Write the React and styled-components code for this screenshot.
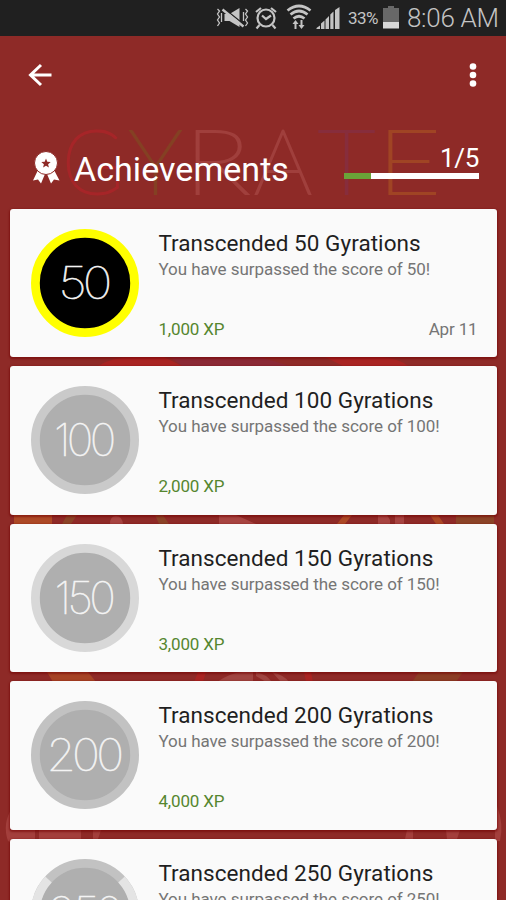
import styled, { createGlobalStyle } from 'styled-components'

const GlobalStyle = createGlobalStyle`
  * { box-sizing: border-box; }
  body {
    margin: 0;
    background: #8e2a27;
    font-family: Roboto, "Liberation Sans", sans-serif;
  }
`

const Screen = styled.div`
  position: relative;
  width: 506px;
  height: 900px;
  overflow: hidden;
  background: #8e2a27;
`

const Backdrop = styled.svg`
  position: absolute;
  left: 0;
  top: 0;
`

const Content = styled.div`
  position: relative;
  display: flex;
  flex-direction: column;
`

const StatusBar = styled.div`
  height: 35.5px;
  background: #202020;
  display: flex;
  align-items: center;
  justify-content: flex-end;
  padding-right: 9px;
  color: #c4c4c4;
`

const StatusIcons = styled.svg`
  display: block;
  flex: none;
`

const Percent = styled.span`
  width: 31px;
  margin: 0 4px 0 7px;
  font-size: 17px;
  line-height: 20px;
  letter-spacing: -0.5px;
  white-space: nowrap;
`

const Clock = styled.span`
  width: 90px;
  margin-left: 8px;
  font-size: 26px;
  font-weight: 300;
  line-height: 36px;
  letter-spacing: -0.3px;
  white-space: nowrap;
`

const Toolbar = styled.div`
  height: 78.5px;
  padding: 0 26px 0 27px;
  display: flex;
  justify-content: space-between;
  align-items: center;
`

const Header = styled.div`
  height: 94.8px;
  padding: 0 27px 0 32px;
  display: flex;
  justify-content: space-between;
`

const Heading = styled.div`
  display: flex;
  align-items: flex-start;
  padding-top: 36px;
`

const H1 = styled.h1`
  margin: -1px 0 0 14px;
  color: #fff;
  font-size: 34px;
  line-height: 40px;
  font-weight: 400;
  letter-spacing: 0.05px;
`

const Progress = styled.div`
  width: 135px;
  padding-top: 29px;
  color: #fff;
  font-size: 26px;
  line-height: 30px;
  letter-spacing: -0.3px;
  text-align: right;
`

const Track = styled.div`
  height: 6px;
  background: #fff;
`

const Bar = styled.div`
  height: 6px;
  background: #6aa338;
`

const List = styled.div`
  display: flex;
  flex-direction: column;
  gap: 9px;
  padding: 0 9.5px 0 10.4px;
`

const Card = styled.div`
  height: 148.5px;
  padding: 20px 19px 0 20.3px;
  display: flex;
  gap: 19.7px;
  background: #fafafa;
  border-radius: 3px;
  box-shadow: 0 1px 2px 1px rgba(115, 0, 0, 0.55);
`

const Medal = styled.svg`
  display: block;
  flex: none;
`

const Info = styled.div`
  flex: 1;
  display: flex;
  flex-direction: column;
  white-space: nowrap;
`

const Title = styled.div`
  color: #1f1f1f;
  font-size: 22.5px;
  line-height: 28px;
  letter-spacing: 0.05px;
`

const Text = styled.div`
  color: #757575;
  font-size: 17px;
  line-height: 24px;
  letter-spacing: -0.05px;
`

const Foot = styled.div`
  display: flex;
  justify-content: space-between;
  margin-top: 35.8px;
  font-size: 17px;
  line-height: 24px;
  letter-spacing: -0.15px;
`

const Xp = styled.span`
  color: #55862f;
`

const Day = styled.span`
  color: #757575;
`

const achievements = [
  { score: 50, xp: '1,000 XP', date: 'Apr 11', ring: '#ffff00', fill: '#000', width: 50 },
  { score: 100, xp: '2,000 XP', ring: '#cacaca', fill: '#afafaf', width: 59 },
  { score: 150, xp: '3,000 XP', ring: '#d8d8d8', fill: '#afafaf', width: 58 },
  { score: 200, xp: '4,000 XP', ring: '#c2c2c2', fill: '#afafaf', width: 74 },
  { score: 250, xp: '5,000 XP', ring: '#c2c2c2', fill: '#afafaf', width: 72, split: true },
]

const Background = () => (
  <Backdrop width="506" height="900" viewBox="0 0 506 900">
    <g fontFamily="Lato, Roboto, sans-serif" fontWeight="100" fontSize="91" strokeWidth="2.2">
      <text x="62" y="194" textLength="62" lengthAdjust="spacingAndGlyphs" fill="#a62528" stroke="#a62528">G</text>
      <text x="129" y="194" textLength="53" lengthAdjust="spacingAndGlyphs" fill="#844023" stroke="#844023">Y</text>
      <text x="184" y="194" textLength="66" lengthAdjust="spacingAndGlyphs" fill="#a03f3c" stroke="#a03f3c">R</text>
      <text x="254" y="194" textLength="58" lengthAdjust="spacingAndGlyphs" fill="#a03f3c" stroke="#a03f3c">A</text>
      <text x="318" y="194" textLength="57" lengthAdjust="spacingAndGlyphs" fill="#872d3c" stroke="#872d3c">T</text>
      <text x="377" y="194" textLength="64" lengthAdjust="spacingAndGlyphs" fill="#a04424" stroke="#a04424">E</text>
    </g>
    <path d="M98 366Q112 357 134 357H164L182 366z" fill="#a92422" />
    <path d="M182 366L170 357H260L290 366z" fill="#8b2935" />
    <path d="M325 357H382Q400 359 408 366H343z" fill="#a92422" />
    <path d="M14 515H52V524H14zM344 515H352L345 524H337zM430 515H438L444 524H436z" fill="#ad4926" />
    <path d="M67 515H77L71 524H62zM155 515H163L169 524H159zM456 515H494V524H456z" fill="#8b4327" />
    <path d="M110 524Q110 516 116 516T123 524zM219 524V515H236L256 524zM378 515H387L390 520V524H378zM395 524V515H404V524z" fill="#a74441" />
    <path d="M47 672H88L96 682H53z" fill="#a64325" />
    <path d="M419 672H463L456 682H412z" fill="#8b3d25" />
    <path d="M198 672H206L203 682H194zM304 672H311L313 682H306z" fill="#a92422" />
    <path d="M217 682Q230 673 242 672H253V682zM256 672Q266 674 272 682H266L256 676zM272 672Q284 675 289 682H281z" fill="#a04541" />
    <path d="M12 808Q2 824 8 841L25 849V830H10zM25 830H35V839H25zM39 830H81V839H39zM93 830H101L98 839H93z" fill="#a33f3c" />
    <path d="M497 806Q504 824 500 841H495V830H497zM407 830H413V839H405zM446 830H460L457 839H447z" fill="#a33f3c" />
  </Backdrop>
)

const Badge = ({ score, ring, fill, width, split }) => (
  <Medal width="108" height="108" viewBox="0 0 108 108">
    <circle cx="54" cy="54" r="49.6" fill={fill} stroke={ring} strokeWidth="8.8" />
    {split && (
      <path
        d="M17.5 20.4A49.6 49.6 0 0 0 17.5 87.6M90.5 20.4A49.6 49.6 0 0 1 90.5 87.6"
        fill="none"
        stroke="#e4e4e4"
        strokeWidth="8.8"
      />
    )}
    <text
      x={52.4 - width / 2}
      y="70.3"
      textLength={width}
      lengthAdjust="spacingAndGlyphs"
      letterSpacing="-3.5"
      fill="#f4f4f4"
      stroke="#f4f4f4"
      strokeWidth="0.6"
      fontFamily="Inter, Roboto, sans-serif"
      fontWeight="100"
      fontSize="44.5"
    >
      {score}
    </text>
  </Medal>
)

const Status = () => (
  <StatusBar>
    <StatusIcons width="125" height="36" viewBox="216.5 0 125 36">
      {/* muted speaker */}
      <path d="M225 14H230L240 8V27L230 21H225z" fill="#c4c4c4" />
      <path d="M224 8L245 25" stroke="#202020" strokeWidth="1.6" />
      <path d="M223 9.5L244 26.5" stroke="#c4c4c4" strokeWidth="2.4" />
      <path
        d="M218 9L220 11L218 14L220 17L218 20L220 23L218 26M222 13V22M246 9L248 11L246 14L248 17L246 20L248 23L246 26M244 12V21"
        fill="none"
        stroke="#c4c4c4"
        strokeWidth="1.3"
      />
      {/* alarm */}
      <g fill="none" stroke="#c4c4c4" strokeWidth="2.2">
        <circle cx="266.500" cy="18" r="8.500" />
        <path d="M256.500 12L261.500 8M276.500 12L271.500 8M260 25L257 28.500M273 25L276 28.500M262.500 15.500L266.500 19L271.500 15.500" />
      </g>
      {/* wifi */}
      <g fill="none" stroke="#c4c4c4" strokeWidth="2.7">
        <path d="M288 10.500Q299.500 1.500 311 10.500" />
        <path d="M291 14.500Q299.500 7.500 308 14.500" />
        <path d="M294 18.500Q299.500 14 305 18.500" />
      </g>
      <path d="M296 20L299 24H297V29H295V24H293zM302 29L299 25H301V20H303V25H305z" fill="#c4c4c4" />
      {/* signal */}
      <path d="M317 29V28L320.500 25.500V29zM321.500 29V23.500L325 20.500V29zM326 29V19.500L329.500 16V29zM330.800 29V14.500L334 11.500V29zM335.500 29V10L340 7V29z" fill="#c4c4c4" />
    </StatusIcons>
    <Percent>33%</Percent>
    <StatusIcons width="16" height="36" viewBox="0 0 16 36">
      <path d="M0 8H5V6H11V8H16V22H0z" fill="#686868" />
      <path d="M0 22H16V28.500H0z" fill="#d8d8d8" />
    </StatusIcons>
    <Clock>8:06 AM</Clock>
  </StatusBar>
)

export default function App() {
  const unlocked = achievements.filter((a) => a.date).length

  return (
    <Screen>
      <GlobalStyle />
      <Background />
      <Content>
        <Status />

        <Toolbar>
          <svg width="25" height="24" viewBox="0 0 25 24">
            <path d="M14 2L3.500 12L14 22M3 12H24.500" fill="none" stroke="#fff" strokeWidth="3" />
          </svg>
          <svg width="14" height="26" viewBox="0 0 14 26">
            <circle cx="7" cy="4.500" r="3.300" fill="#fff" />
            <circle cx="7" cy="13" r="3.300" fill="#fff" />
            <circle cx="7" cy="21.500" r="3.300" fill="#fff" />
          </svg>
        </Toolbar>

        <Header>
          <Heading>
            <svg width="28" height="34" viewBox="0 0 28 34">
              <path d="M6 20L1 30.500L6 29.500L9 33.500L13 24zM22 20L27.500 30.500L22 29.500L19 33.500L15 24z" fill="#fff" />
              <circle cx="14" cy="13" r="11.500" fill="#fff" stroke="#8e2a27" strokeWidth="1" />
              <path d="M14 8.500L15.300 11.700L18.700 12L16.100 14.200L16.900 17.500L14 15.700L11.100 17.500L11.900 14.200L9.300 12L12.700 11.700z" fill="#8e2a27" />
            </svg>
            <H1>Achievements</H1>
          </Heading>
          <Progress>
            {unlocked}/{achievements.length}
            <Track>
              <Bar style={{ width: `${(unlocked / achievements.length) * 100}%` }} />
            </Track>
          </Progress>
        </Header>

        <List>
          {achievements.map((item) => (
            <Card key={item.score}>
              <Badge {...item} />
              <Info>
                <Title>Transcended {item.score} Gyrations</Title>
                <Text>You have surpassed the score of {item.score}!</Text>
                <Foot>
                  <Xp>{item.xp}</Xp>
                  {item.date && <Day>{item.date}</Day>}
                </Foot>
              </Info>
            </Card>
          ))}
        </List>
      </Content>
    </Screen>
  )
}
